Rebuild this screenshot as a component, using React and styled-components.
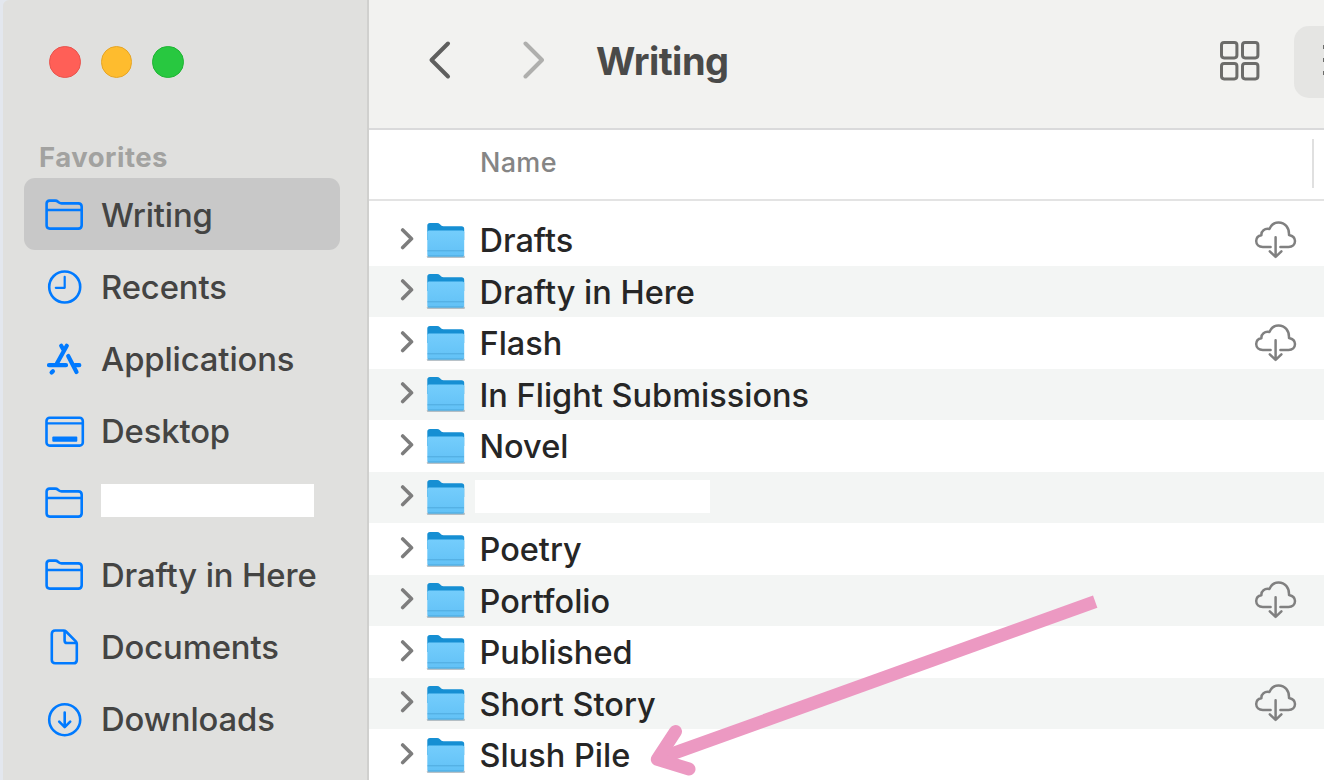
import React from "react";
import styled, { createGlobalStyle } from "styled-components";

const favorites = [
  { label: "Writing", icon: "folder", active: true },
  { label: "Recents", icon: "clock" },
  { label: "Applications", icon: "apps" },
  { label: "Desktop", icon: "desktop" },
  { label: "", icon: "folder" },
  { label: "Drafty in Here", icon: "folder" },
  { label: "Documents", icon: "document" },
  { label: "Downloads", icon: "download" },
];

const files = [
  { name: "Drafts", cloud: true },
  { name: "Drafty in Here" },
  { name: "Flash", cloud: true },
  { name: "In Flight Submissions" },
  { name: "Novel" },
  { name: "" },
  { name: "Poetry" },
  { name: "Portfolio", cloud: true },
  { name: "Published" },
  { name: "Short Story", cloud: true },
  { name: "Slush Pile" },
];

const icons = {
  folder: (
    <>
      <path d="M2.6 31.5V9.6Q2.6 6.6 5.6 6.6H11.2Q12.8 6.6 14 7.7L15 8.6Q16 9.4 17.6 9.4H34.3Q37.7 9.4 37.7 12.8V31.2Q37.7 34.6 34.3 34.6H5.8Q2.6 34.6 2.6 31.5Z" />
      <path d="M2.6 16H37.7" />
    </>
  ),
  clock: (
    <>
      <circle cx="20.7" cy="21" r="15.5" />
      <path d="M20.7 10.8V21.8H11.8" strokeWidth="2.2" strokeLinecap="round" strokeLinejoin="round" />
    </>
  ),
  apps: (
    <g strokeWidth="4.2" strokeLinecap="round">
      <path d="M5 27.2H22M31 27.2H35.3" />
      <path d="M22.8 7.8L12.9 25.6M17.2 7.8L19.3 11.4" />
      <path d="M24.2 18L32.5 34M8.9 33.2L7.6 34.5" />
    </g>
  ),
  desktop: (
    <>
      <rect x="2.5" y="7.7" width="36.3" height="27.9" rx="3.2" />
      <path d="M2.5 13.4H38.8" strokeWidth="2.2" />
      <rect x="8.3" y="26.5" width="25" height="5.2" rx="1" fill="#007aff" stroke="none" />
    </>
  ),
  document: (
    <>
      <path d="M11.2 4.5H19.6Q21 4.5 22 5.5L31.8 15.4Q32.8 16.4 32.8 17.8V33.9Q32.8 37.3 29.4 37.3H11.2Q7.8 37.3 7.8 33.9V7.9Q7.8 4.5 11.2 4.5Z" />
      <path d="M20.6 5V14.4Q20.6 17 23.2 17H32.4" />
    </>
  ),
  download: (
    <>
      <circle cx="20.7" cy="21.7" r="15.5" />
      <path d="M20.7 14.6V28.6M15.2 23.6L20.7 29.1L26.2 23.6" strokeLinecap="round" strokeLinejoin="round" />
    </>
  ),
};

function FolderIcon() {
  return (
    <FolderSvg viewBox="0 0 42 40">
      <defs>
        <linearGradient id="front" x1="0" y1="0" x2="0" y2="1">
          <stop offset="0" stopColor="#74cdfc" />
          <stop offset="1" stopColor="#62c1f6" />
        </linearGradient>
      </defs>
      <path d="M3 36.7H38.8" stroke="#8b9aa3" strokeOpacity="0.6" strokeWidth="2.4" strokeLinecap="round" />
      <path d="M2.3 5.6Q2.3 3 5 3H12Q13.8 3 15 4.2L16.2 5.4Q17 6.2 18.6 6.2H36.5Q39.2 6.2 39.2 8.8V20H2.3Z" fill="#168fd3" />
      <path d="M2.3 12.2Q2.3 10.6 4 10.6H37.5Q39.2 10.6 39.2 12.2V34.8Q39.2 36.5 37.5 36.5H4Q2.3 36.5 2.3 34.8Z" fill="url(#front)" />
      <path d="M2.5 30.8H39" stroke="#4faadd" strokeWidth="1" />
      <path d="M3 36H38.5" stroke="#4ba8dc" strokeWidth="1.1" />
    </FolderSvg>
  );
}

function CloudIcon() {
  return (
    <CloudSvg viewBox="0 0 44 40">
      <path d="M16.6 27H8.8C4.9 27 2.2 24.5 2.2 21.1C2.2 17.9 4.4 15.7 7.4 15.2C7.1 10.9 10.6 8.1 15.4 9C17.2 4.7 20.6 2.5 24.6 2.5C30.8 2.5 35.4 7.5 35 14.9C38.6 15.6 41 17.9 41 21.1C41 24.5 38.4 27 34.6 27H26.4" />
      <path d="M21.6 17.3V36.7M15.8 31.3L21.6 36.9L27.4 31.3" />
    </CloudSvg>
  );
}

export default function App() {
  return (
    <Window>
      <GlobalStyle />
      <Sidebar>
        <Lights>
          <Light color="#ff5f57" edge="#e8544e" />
          <Light color="#febc2e" edge="#e6a526" />
          <Light color="#28c840" edge="#20b534" />
        </Lights>
        <SectionTitle>Favorites</SectionTitle>
        {favorites.map((item, i) => (
          <Favorite key={i} $active={item.active}>
            <FavoriteSvg viewBox="0 0 42 40">{icons[item.icon]}</FavoriteSvg>
            {item.label ? <Label>{item.label}</Label> : <Blank $width={213} $left={0} $bottom={3} />}
          </Favorite>
        ))}
      </Sidebar>
      <Main>
        <Toolbar>
          <Nav>
            <svg width="24" height="40" viewBox="0 0 24 40">
              <path d="M20 3.5L3.5 20L20 36.5" />
            </svg>
            <svg width="24" height="40" viewBox="0 0 24 40" opacity="0.45">
              <path d="M3.5 3.5L20 20L3.5 36.5" />
            </svg>
          </Nav>
          <Title>Writing</Title>
          <GridSvg viewBox="0 0 40 40">
            <rect x="1.5" y="1.5" width="15.4" height="15.4" rx="2.6" />
            <rect x="22.5" y="1.5" width="15.4" height="15.4" rx="2.6" />
            <rect x="1.5" y="22.5" width="15.4" height="15.4" rx="2.6" />
            <rect x="22.5" y="22.5" width="15.4" height="15.4" rx="2.6" />
          </GridSvg>
          <ListButton>
            <i />
            <i />
            <i />
          </ListButton>
        </Toolbar>
        <ColumnHeader>
          <span>Name</span>
          <Divider />
        </ColumnHeader>
        <List>
          {files.map((file, i) => (
            <Row key={i}>
              <Chevron viewBox="0 0 14 24">
                <path d="M2.7 3L11.5 11.8L2.7 20.6" />
              </Chevron>
              <FolderIcon />
              {file.name ? <Label>{file.name}</Label> : <Blank $width={235.5} $left={-5} $bottom={2} />}
              {file.cloud && <CloudIcon />}
            </Row>
          ))}
        </List>
      </Main>
      <Arrow viewBox="0 0 460 200">
        <path d="M455.2 21.7L20 178.2" />
        <path d="M35.5 151.5L17.3 179.3L49 189" strokeLinecap="round" strokeLinejoin="round" />
      </Arrow>
    </Window>
  );
}

const GlobalStyle = createGlobalStyle`
  body {
    margin: 0;
    overflow: hidden;
    font-family: Inter, "Liberation Sans", sans-serif;
  }

  * {
    box-sizing: border-box;
  }
`;

const Window = styled.div`
  position: relative;
  display: flex;
  width: 1324px;
  height: 780px;
  overflow: hidden;
  background: #e3e7ee;
  padding-left: 3px;
`;

const Sidebar = styled.aside`
  width: 366px;
  flex: none;
  background: #e0e0de;
  border-right: 2px solid #d0d0ce;
  border-top-left-radius: 6px;
  padding: 46px 26px 0 21px;
`;

const Lights = styled.div`
  display: flex;
  gap: 20px;
  padding-left: 25px;
`;

const Light = styled.div`
  width: 31.5px;
  height: 31.5px;
  border-radius: 50%;
  background: ${(props) => props.color};
  border: 1px solid ${(props) => props.edge};
`;

const SectionTitle = styled.h2`
  margin: 60.5px 0 0;
  padding: 0 0 2px 15px;
  height: 40px;
  line-height: 38px;
  font-size: 27.5px;
  font-weight: 650;
  letter-spacing: 0.5px;
  color: #a2a2a0;
`;

const Label = styled.span`
  padding-top: 2px;
`;

const Favorite = styled.div`
  display: flex;
  align-items: center;
  width: 316px;
  height: 72px;
  padding-left: 20px;
  border-radius: 11px;
  font-size: 32.8px;
  font-weight: 450;
  letter-spacing: -0.12px;
  color: #444443;
  white-space: nowrap;
  background: ${(props) => (props.$active ? "#c8c8c8" : "transparent")};
`;

const FavoriteSvg = styled.svg`
  width: 42px;
  height: 40px;
  flex: none;
  margin-right: 15px;
  fill: none;
  stroke: #007aff;
  stroke-width: 2.6;
`;

const Blank = styled.div`
  width: ${(props) => props.$width}px;
  height: 33px;
  margin: 0 0 ${(props) => props.$bottom}px ${(props) => props.$left}px;
  background: #fff;
`;

const Main = styled.main`
  flex: 1;
  min-width: 0;
  background: #fff;
`;

const Toolbar = styled.header`
  display: flex;
  align-items: center;
  height: 130px;
  padding: 0 0 7px 59px;
  background: #f2f2f0;
  border-bottom: 2px solid #dadadb;
`;

const Nav = styled.nav`
  display: flex;
  gap: 70px;
  width: 168px;
  padding-bottom: 1px;

  path {
    fill: none;
    stroke: #5f5f5e;
    stroke-width: 4;
    stroke-linecap: round;
    stroke-linejoin: round;
  }
`;

const Title = styled.h1`
  margin: 0;
  font-size: 38px;
  font-weight: 700;
  letter-spacing: -0.5px;
  color: #4a4a49;
`;

const GridSvg = styled.svg`
  width: 40px;
  height: 40px;
  margin-left: auto;
  fill: none;
  stroke: #6c6c6a;
  stroke-width: 3;
`;

const ListButton = styled.div`
  display: flex;
  flex-direction: column;
  align-items: flex-end;
  justify-content: center;
  gap: 9px;
  width: 30px;
  height: 72px;
  margin: 2px 0 0 34px;
  padding-bottom: 3px;
  border-radius: 15px 0 0 15px;
  background: #e5e5e3;

  i {
    width: 1px;
    height: 4px;
    background: #6c6c6a;
  }
`;

const ColumnHeader = styled.div`
  display: flex;
  align-items: center;
  justify-content: space-between;
  height: 71px;
  padding: 0 10px 5px 111px;
  border-bottom: 2px solid #e3e3e3;
  font-size: 27px;
  font-weight: 450;
  letter-spacing: 0.3px;
  color: #858585;
`;

const Divider = styled.div`
  width: 2px;
  height: 49px;
  margin-top: 3px;
  background: #e0e0e0;
`;

const List = styled.div`
  padding-top: 13px;
`;

const Row = styled.div`
  display: flex;
  align-items: center;
  height: 51.5px;
  padding: 0 26px 0 31px;
  font-size: 32.5px;
  font-weight: 450;
  color: #262626;
  white-space: nowrap;

  &:nth-child(even) {
    background: #f3f5f4;
  }
`;

const Chevron = styled.svg`
  width: 14px;
  height: 24px;
  flex: none;
  margin: 0 11px 2px 0;
  fill: none;
  stroke: #7d7d7d;
  stroke-width: 3.6;
  stroke-linecap: round;
  stroke-linejoin: round;
`;

const FolderSvg = styled.svg`
  width: 42px;
  height: 40px;
  flex: none;
  margin-right: 12.5px;
`;

const CloudSvg = styled.svg`
  width: 44px;
  height: 40px;
  margin-left: auto;
  fill: none;
  stroke: #808080;
  stroke-width: 2.5;
  stroke-linecap: round;
  stroke-linejoin: round;
`;

const Arrow = styled.svg`
  position: absolute;
  left: 640px;
  top: 580px;
  width: 460px;
  height: 200px;
  overflow: visible;
  fill: none;
  stroke: #ec99c2;
  stroke-width: 13;
`;
